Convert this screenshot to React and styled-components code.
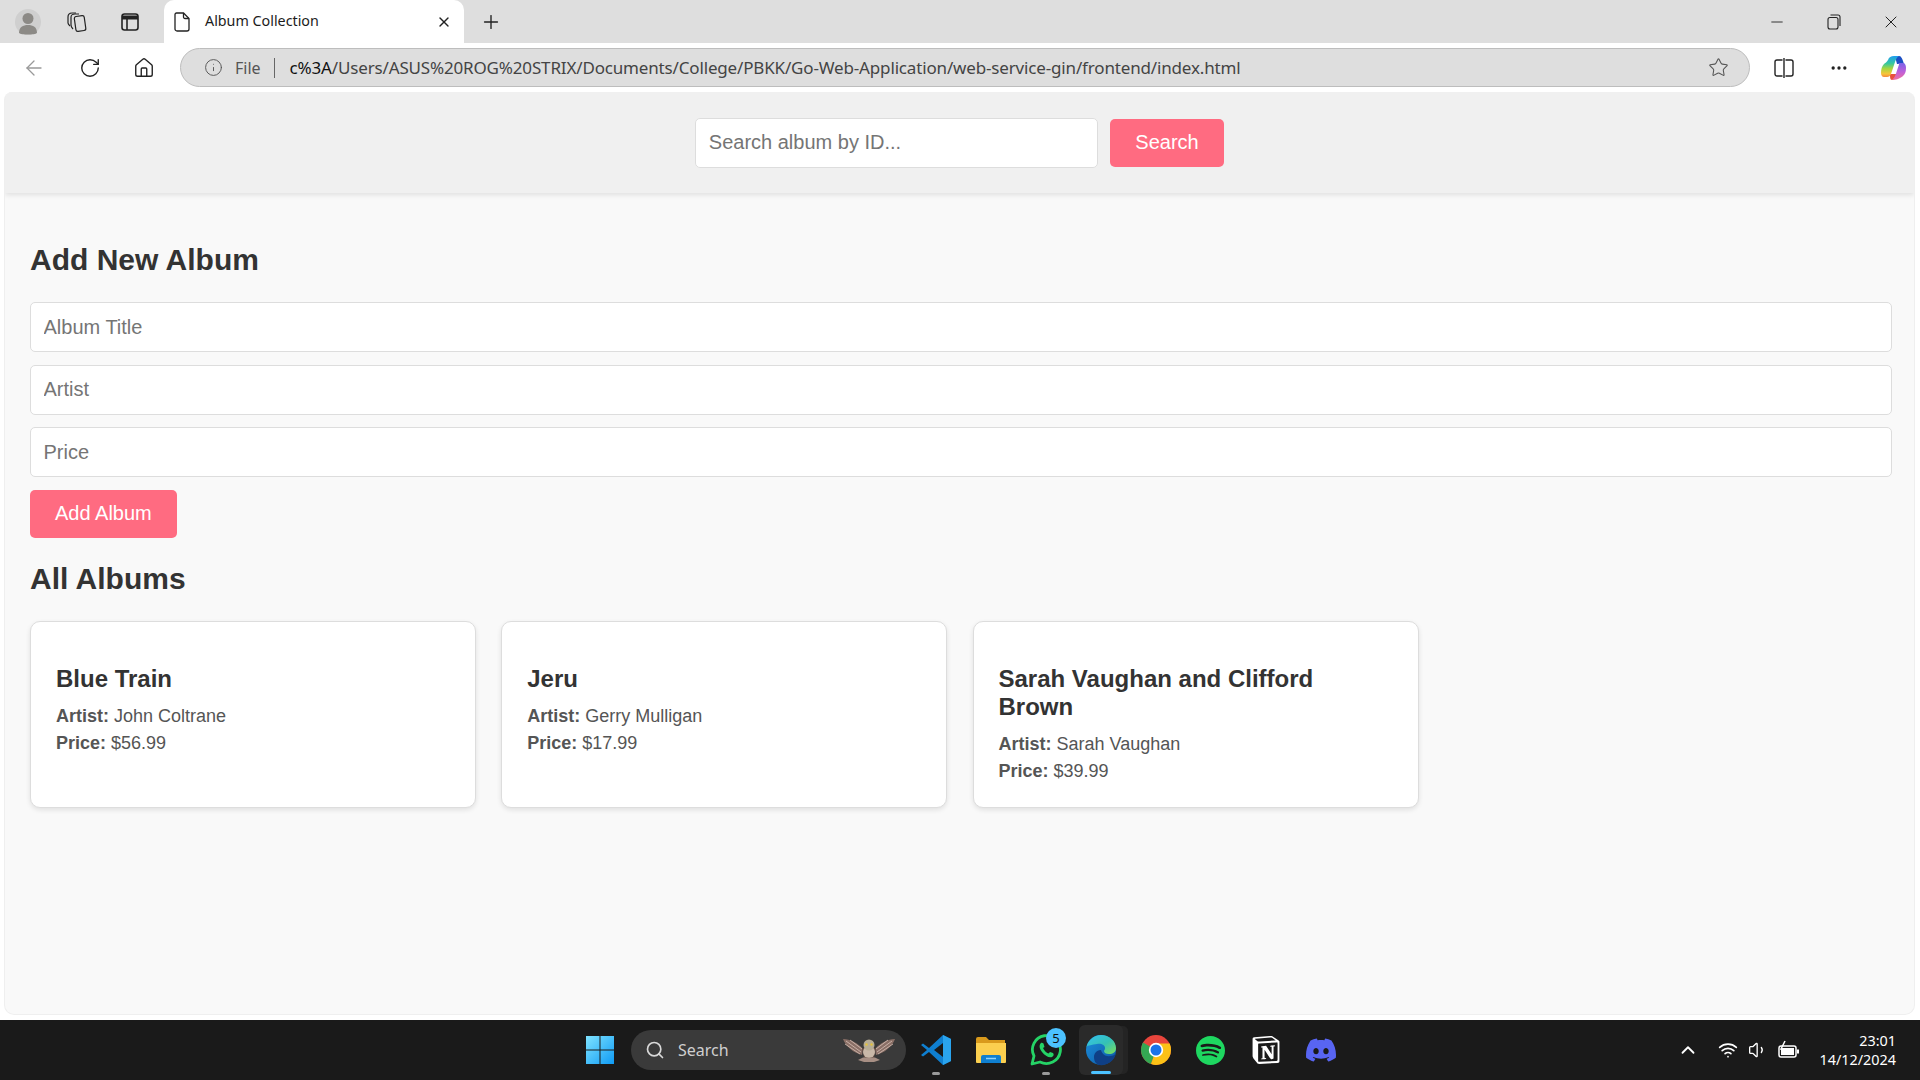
import React from 'react';
import styled, { createGlobalStyle } from 'styled-components';
import { Search as SearchGlyph, ChevronUp, Wifi, Volume1, X, Plus, ArrowLeft, RotateCw, Home, Info, Star, Minus, Ellipsis } from 'lucide-react';
import { SiDiscord, SiSpotify, SiNotion } from 'react-icons/si';

const GlobalStyle = createGlobalStyle`
    html, body {
        margin: 0;
        height: 100%;
        overflow: hidden;
        background: #ffffff;
    }
    * {
        box-sizing: border-box;
    }
`;

const Screen = styled.div`
    display: flex;
    flex-direction: column;
    width: 1920px;
    height: 1080px;
    overflow: hidden;
    background: #ffffff;
`;

/* browser chrome */
const TabStrip = styled.div`
    display: flex;
    align-items: flex-end;
    height: 43px;
    flex: none;
    background: #dedede;
    padding-left: 6px;
`;

const StripButton = styled.div`
    display: flex;
    align-items: center;
    justify-content: center;
    width: ${(p) => p.$w || 52}px;
    height: 43px;
    flex: none;
    color: #222222;
`;

const Tab = styled.div`
    display: flex;
    align-items: center;
    width: 300px;
    height: 43px;
    flex: none;
    margin-left: 8px;
    padding: 0 12px 0 10px;
    background: #ffffff;
    border-radius: 10px 10px 0 0;
`;

const TabTitle = styled.span`
    flex: 1;
    margin-left: 15px;
    padding-bottom: 2px;
    font: 14.3px 'Noto Sans', 'Open Sans', sans-serif;
    color: #1c1c1c;
`;

const WindowControls = styled.div`
    display: flex;
    margin-left: auto;
    padding-right: 1px;
`;

const AddressRow = styled.div`
    display: flex;
    align-items: center;
    height: 49px;
    flex: none;
    padding-left: 7px;
    background: #ffffff;
`;

const NavButton = styled.div`
    display: flex;
    align-items: center;
    justify-content: center;
    width: ${(p) => p.$w || 55}px;
    height: 40px;
    flex: none;
    color: ${(p) => p.$color || '#222222'};
`;

const AddressBar = styled.div`
    display: flex;
    align-items: center;
    width: 1570px;
    height: 39px;
    flex: none;
    margin-left: 10px;
    padding: 0 20px 0 23px;
    background: #dedede;
    border: 1px solid #bdbdbd;
    border-radius: 20px;
    font: 17px 'Noto Sans', 'Open Sans', sans-serif;
`;

const FileLabel = styled.span`
    margin-left: 12px;
    color: #555555;
    font-size: 16px;
`;

const Divider = styled.span`
    width: 1px;
    height: 20px;
    margin: 0 15px 0 13px;
    background: #666666;
`;

const Url = styled.span`
    flex: 1;
    color: #444444;
    white-space: nowrap;
    letter-spacing: -0.16px;
`;

const UrlHost = styled.span`
    color: #111111;
`;

/* page */
const Viewport = styled.main`
    flex: 1;
    min-height: 0;
    margin: 0 5px 5px 4px;
    background: #f9f9f9;
    border-radius: 8px 8px 10px 10px;
    border: 1px solid #efefef;
    border-top: none;
    overflow: hidden;
    font-family: 'Liberation Sans', Arial, sans-serif;
    color: #333333;
`;

const SearchBar = styled.header`
    display: flex;
    justify-content: center;
    align-items: center;
    gap: 12px;
    height: 101px;
    background: #f0f0f0;
    box-shadow: 0 2px 5px rgba(0, 0, 0, 0.1);
`;

const Field = styled.input`
    display: block;
    width: ${(p) => p.$w || '100%'};
    height: 50px;
    padding: 0 12.5px;
    background: #ffffff;
    border: 1px solid #dddddd;
    border-radius: 5px;
    font: 20px 'Liberation Sans', Arial, sans-serif;
    outline: none;
    &::placeholder {
        color: #757575;
        opacity: 1;
    }
`;

const PinkButton = styled.button`
    height: 48px;
    padding: 0 25px;
    background: #ff6b81;
    border: none;
    border-radius: 5px;
    color: #ffffff;
    font: 20px 'Liberation Sans', Arial, sans-serif;
`;

const Content = styled.section`
    padding: 0 22px 0 25px;
`;

const Heading = styled.h2`
    margin: ${(p) => p.$margin};
    font-size: 30px;
    line-height: 37px;
    font-weight: 700;
    color: #333333;
`;

const AlbumForm = styled.form`
    display: flex;
    flex-direction: column;
    align-items: flex-start;
    gap: 12.5px;
`;

const CardGrid = styled.div`
    display: grid;
    grid-template-columns: repeat(auto-fill, 446px);
    gap: 25.25px;
`;

const Card = styled.article`
    padding: 20px 25px 18px;
    background: #ffffff;
    border: 1px solid #dddddd;
    border-radius: 10px;
    box-shadow: 0 2px 5px rgba(0, 0, 0, 0.1);
`;

const CardTitle = styled.h3`
    margin: 23px 0 14px;
    font-size: 24px;
    line-height: 28px;
    font-weight: 700;
    color: #333333;
`;

const CardLine = styled.p`
    margin: 8px 0;
    font-size: 18px;
    line-height: 19px;
    color: #555555;
`;

/* taskbar */
const Taskbar = styled.footer`
    display: grid;
    grid-template-columns: 1fr auto 1fr;
    align-items: center;
    height: 60px;
    flex: none;
    background: #1a1a1a;
`;

const TaskCenter = styled.div`
    display: flex;
    align-items: center;
    grid-column: 2;
`;

const TaskItem = styled.div`
    position: relative;
    display: flex;
    align-items: center;
    justify-content: center;
    width: ${(p) => (p.$active ? 44 : 55)}px;
    height: 50px;
    flex: none;
    margin: ${(p) => (p.$active ? '0 5.5px' : '0')};
    border-radius: 6px;
    background: ${(p) => (p.$active ? '#2a2a2a' : 'transparent')};
    box-shadow: ${(p) => (p.$active ? '6px 0 0 -1px #242424' : 'none')};
`;

const RunDot = styled.span`
    position: absolute;
    bottom: ${(p) => (p.$active ? 1 : 0)}px;
    left: 50%;
    width: ${(p) => (p.$active ? 20 : 8)}px;
    height: 3px;
    margin-left: ${(p) => (p.$active ? -10 : -4)}px;
    border-radius: 2px;
    background: ${(p) => (p.$active ? '#4cc2ff' : '#9a9a9a')};
`;

const Badge = styled.span`
    position: absolute;
    top: 3px;
    right: 7px;
    width: 20px;
    height: 20px;
    border-radius: 50%;
    background: #4cc2ff;
    color: #111111;
    font: 13px/20px 'Noto Sans', sans-serif;
    text-align: center;
`;

const TaskSearch = styled.div`
    display: flex;
    align-items: center;
    width: 275px;
    height: 40px;
    flex: none;
    margin: 0 2px 0 4px;
    padding: 0 10px 0 14px;
    background: #3a3a3a;
    border-radius: 20px;
    color: #d8d8d8;
`;

const TaskSearchLabel = styled.span`
    flex: 1;
    margin-left: 13px;
    font: 16px 'Noto Sans', 'Open Sans', sans-serif;
    color: #cfcfcf;
`;

const Tray = styled.div`
    display: flex;
    align-items: center;
    justify-self: end;
    padding-right: 24px;
    color: #ffffff;
`;

const TrayIcon = styled.div`
    display: flex;
    justify-content: center;
    width: ${(p) => p.$w || 30}px;
`;

const Clock = styled.div`
    margin-left: 10px;
    font: 14.4px/19px 'Noto Sans', 'Open Sans', sans-serif;
    color: #ffffff;
    text-align: right;
`;

const Avatar = () => (
    <svg width="26" height="26" viewBox="0 0 26 26">
        <circle cx="13" cy="13" r="13" fill="#cfcfcf" />
        <circle cx="13" cy="9.5" r="5.5" fill="#8c8a86" />
        <path d="M4 24c0-6 4-8 9-8s9 2 9 8c-2 2-16 2-18 0z" fill="#8c8a86" />
    </svg>
);

const CollectionsIcon = () => (
    <svg width="22" height="22" viewBox="0 0 22 22" fill="none" stroke="#222" strokeWidth="1.2">
        <rect x="9" y="5" width="10" height="15" rx="2" transform="rotate(-8 14 12)" />
        <path d="M7 18c-1-1-2-2-2-4V6c0-2 2-3 4-3h4" />
        <path d="M4 15c-1-1-2-2-2-3V6c0-3 2-4 4-4h4" />
    </svg>
);

const VerticalTabsIcon = () => (
    <svg width="20" height="20" viewBox="0 0 20 20" fill="none" stroke="#222" strokeWidth="1.6">
        <rect x="2" y="2" width="16" height="16" rx="2.5" />
        <path d="M2 5.5h16" strokeWidth="4" />
        <path d="M7 6v12" />
    </svg>
);

const PageIcon = () => (
    <svg width="16" height="20" viewBox="0 0 16 20" fill="none" stroke="#222" strokeWidth="1.3">
        <path d="M2.5 1h7L15 6.5V17a2 2 0 0 1-2 2H3a2 2 0 0 1-2-2V2.500A1.500 1.500 0 0 1 2.500 1z" />
        <path d="M9.500 1v4a1.500 1.500 0 0 0 1.500 1.500h4" />
    </svg>
);

const RestoreIcon = () => (
    <svg width="14" height="16" viewBox="0 0 14 16" fill="none" stroke="#222" strokeWidth="1.1">
        <rect x="1" y="3.500" width="10" height="11.500" rx="2" />
        <path d="M3.500 1h7.500a2 2 0 0 1 2 2v9" />
    </svg>
);

const SplitIcon = () => (
    <svg width="20" height="22" viewBox="0 0 20 22" fill="none" stroke="#222" strokeWidth="1.4">
        <rect x="1" y="3" width="18" height="16" rx="2" />
        <path d="M10 0v22" fill="none" stroke="#fff" strokeWidth="3" />
        <path d="M10 1v20" />
    </svg>
);

const CopilotIcon = () => (
    <svg width="27" height="26" viewBox="0 0 27 26">
        <defs>
            <linearGradient id="copLeft" x1="0" y1="0" x2="0" y2="1">
                <stop offset="0" stopColor="#1f9df0" />
                <stop offset="0.35" stopColor="#35c7a0" />
                <stop offset="0.6" stopColor="#a6d63f" />
                <stop offset="0.85" stopColor="#f7c53a" />
                <stop offset="1" stopColor="#f58a3c" />
            </linearGradient>
            <linearGradient id="copRight" x1="0" y1="0" x2="0" y2="1">
                <stop offset="0" stopColor="#7a63e8" />
                <stop offset="0.55" stopColor="#c060d8" />
                <stop offset="1" stopColor="#f06f9c" />
            </linearGradient>
        </defs>
        <path d="M19 1c2 0 3 2 4 5l1 3h-7c-1-3-1-6-3-8z" fill="#1c4fc4" />
        <path d="M10 19h7c-1 3-2 6-5 6-2 0-2-3-2-6z" fill="#e8503c" />
        <path d="M8 5C9 2 11 1 14 1h5c-2 1-3 3-4 6l-4 12c-.7 2-2 3-4 3H4c-2 0-3-2-3-4 0-4 1-7 3-9 1-1 3-2 4-4z" fill="url(#copLeft)" />
        <path d="M17 8h6c2 0 3 2 3 5 0 4-1 6-3 8-1 1-3 2-5 3-1 .5-5 1-6 .5 2-1 3-3 4-6l3-9c0-1 -.5-1.500-2-1.500z" fill="url(#copRight)" />
    </svg>
);

const WindowsLogo = () => (
    <svg width="30" height="30" viewBox="0 0 30 30">
        <defs>
            <linearGradient id="winG" x1="0" y1="0" x2="1" y2="1">
                <stop offset="0" stopColor="#7fe3ff" />
                <stop offset="1" stopColor="#0f9bf5" />
            </linearGradient>
        </defs>
        <path d="M1 1h13.500v13.500H1zM15.500 1H29v13.500H15.500zM1 15.500h13.500V29H1zM15.500 15.500H29V29H15.500z" fill="url(#winG)" />
    </svg>
);

const Owl = () => (
    <svg width="54" height="26" viewBox="0 0 54 26">
        <path d="M1 2c7 0 15 4 20 10l-1 6C12 16 4 10 1 2z" fill="#8a6f66" />
        <path d="M53 2c-7 0-15 4-20 10l1 6c8-2 16-8 19-16z" fill="#8a6f66" />
        <path d="M4 4l15 11M8 3l12 9M3 7l15 10M50 4L35 15M46 3L34 12M51 7L36 17" stroke="#d8c2b8" strokeWidth="0.8" />
        <path d="M20 11h14l-2 10h-10z" fill="#5f4a42" />
        <ellipse cx="27" cy="15" rx="6" ry="6" fill="#c9b8a8" />
        <circle cx="27" cy="8" r="5.500" fill="#b7ad95" />
        <circle cx="24.500" cy="7.500" r="1.200" fill="#e2c23c" />
        <circle cx="29.500" cy="7.500" r="1.200" fill="#e2c23c" />
        <path d="M16 23l5-2.500h12l5 2.500-6 2h-10z" fill="#a78f84" />
    </svg>
);

const VsCodeIcon = () => (
    <svg width="32" height="32" viewBox="0 0 32 32">
        <path d="M23 1l8 4v22l-8 4-14-13-6 4.500L1 21l6-5-6-5 2-1.500L9 14z" fill="#0f7fd0" />
        <path d="M23 1l8 4v22l-8 4z" fill="#2aa4ee" />
        <path d="M23 9l-9 7 9 7z" fill="#1a1a1a" />
    </svg>
);

const FolderIcon = () => (
    <svg width="32" height="28" viewBox="0 0 32 28">
        <path d="M1 3a2 2 0 0 1 2-2h8l3 3h16v6H1z" fill="#d99a1c" />
        <path d="M1 7h30v19a1 1 0 0 1-1 1H2a1 1 0 0 1-1-1z" fill="#fbcf4f" />
        <path d="M6 27v-6a2 2 0 0 1 2-2h16a2 2 0 0 1 2 2v6z" fill="#0f7fd0" />
        <path d="M11 22.500h10" stroke="#8fd4ff" strokeWidth="1.500" />
    </svg>
);

const WhatsappIcon = () => (
    <svg width="32" height="32" viewBox="0 0 32 32">
        <path d="M2 30l2-8A14 14 0 1 1 10 28z" fill="none" stroke="#25d366" strokeWidth="2.800" strokeLinejoin="round" />
        <path d="M11 9c-2 2-2 5 1 9s7 6 10 5c2-1 2-3 1-4l-3-1-1.500 1.500c-2-.5-4.500-3-5.500-5.500L14.500 13l-1-3.500c-1-1-2-1-2.500-.5z" fill="#25d366" />
    </svg>
);

const EdgeIcon = () => (
    <svg width="32" height="32" viewBox="0 0 32 32">
        <defs>
            <linearGradient id="edgeA" x1="0" y1="0" x2="1" y2="1">
                <stop offset="0" stopColor="#35c1f1" />
                <stop offset="0.55" stopColor="#35c1b4" />
                <stop offset="1" stopColor="#7ee05a" />
            </linearGradient>
            <linearGradient id="edgeB" x1="0" y1="0" x2="1" y2="1">
                <stop offset="0" stopColor="#1d8fdc" />
                <stop offset="1" stopColor="#0c59a4" />
            </linearGradient>
        </defs>
        <circle cx="16" cy="16" r="15" fill="url(#edgeB)" />
        <path d="M1.500 13C3 6 9 1 16 1c8 0 15 6 15 13 0 4-3 6-7 6-3 0-5-1-5-3 0-1 1-1 1-3 0-3-4-5-8-4-5 1-9 1-11 3z" fill="url(#edgeA)" />
        <path d="M18 31c-5 1-9-2-9-8 0-3 2-7 7-7 1 4 5 7 9 6 3 0 5-1 6-3-1 6-6 11-13 12z" fill="#0f3f86" />
    </svg>
);

const ChromeIcon = () => (
    <svg width="32" height="32" viewBox="0 0 32 32">
        <circle cx="16" cy="16" r="15" fill="#e8453c" />
        <path d="M16 16L3 8.500A15 15 0 0 0 11 30.100z" fill="#34a853" />
        <path d="M16 16l-5 14.100A15 15 0 0 0 31 16z" fill="#fbc116" />
        <path d="M16 9.500h13.700A15 15 0 0 1 31 16H22z" fill="#fbc116" />
        <circle cx="16" cy="16" r="7.200" fill="#ffffff" />
        <circle cx="16" cy="16" r="5.500" fill="#1a73e8" />
    </svg>
);

const BatteryIcon = () => (
    <svg width="22" height="20" viewBox="0 0 22 20" fill="none">
        <rect x="1" y="6" width="17" height="11" rx="2" stroke="#fff" strokeWidth="1.500" />
        <rect x="3" y="8" width="13" height="7" fill="#fff" />
        <rect x="19" y="9.500" width="2" height="4" fill="#fff" />
        <path d="M7 1L3 9h4l-2 5" stroke="#fff" strokeWidth="1.500" />
    </svg>
);

const albums = [
    { id: 1, title: 'Blue Train', artist: 'John Coltrane', price: '56.99' },
    { id: 2, title: 'Jeru', artist: 'Gerry Mulligan', price: '17.99' },
    { id: 3, title: 'Sarah Vaughan and Clifford Brown', artist: 'Sarah Vaughan', price: '39.99' },
];

export default function App() {
    return (
        <Screen>
            <GlobalStyle />
            <TabStrip>
                <StripButton $w={44}><Avatar /></StripButton>
                <StripButton $w={54}><CollectionsIcon /></StripButton>
                <StripButton $w={52}><VerticalTabsIcon /></StripButton>
                <Tab>
                    <PageIcon />
                    <TabTitle>Album Collection</TabTitle>
                    <X size={16} strokeWidth={2} color="#222" />
                </Tab>
                <StripButton $w={54}><Plus size={22} strokeWidth={1.5} /></StripButton>
                <WindowControls>
                    <StripButton $w={57}><Minus size={18} strokeWidth={1.2} /></StripButton>
                    <StripButton $w={57}><RestoreIcon /></StripButton>
                    <StripButton $w={57}><X size={20} strokeWidth={1.2} /></StripButton>
                </WindowControls>
            </TabStrip>
            <AddressRow>
                <NavButton $w={54} $color="#999999"><ArrowLeft size={24} strokeWidth={1.3} /></NavButton>
                <NavButton $w={57}><RotateCw size={22} strokeWidth={1.5} /></NavButton>
                <NavButton $w={52}><Home size={22} strokeWidth={1.5} /></NavButton>
                <AddressBar>
                    <Info size={19} strokeWidth={1.2} color="#555" />
                    <FileLabel>File</FileLabel>
                    <Divider />
                    <Url><UrlHost>c%3A</UrlHost>/Users/ASUS%20ROG%20STRIX/Documents/College/PBKK/Go-Web-Application/web-service-gin/frontend/index.html</Url>
                    <Star size={21} strokeWidth={1.2} color="#555" />
                </AddressBar>
                <NavButton $w={68}><SplitIcon /></NavButton>
                <NavButton $w={42}><Ellipsis size={20} strokeWidth={2} /></NavButton>
                <NavButton $w={66}><CopilotIcon /></NavButton>
            </AddressRow>
            <Viewport>
                <SearchBar>
                    <Field $w="403px" placeholder="Search album by ID..." />
                    <PinkButton>Search</PinkButton>
                </SearchBar>
                <Content>
                    <Heading $margin="48px 0 24px">Add New Album</Heading>
                    <AlbumForm>
                        <Field placeholder="Album Title" />
                        <Field placeholder="Artist" />
                        <Field placeholder="Price" />
                        <PinkButton type="button">Add Album</PinkButton>
                    </AlbumForm>
                    <Heading $margin="22px 0 24px">All Albums</Heading>
                    <CardGrid>
                        {albums.map((album) => (
                            <Card key={album.id}>
                                <CardTitle>{album.title}</CardTitle>
                                <CardLine><strong>Artist:</strong> {album.artist}</CardLine>
                                <CardLine><strong>Price:</strong> ${album.price}</CardLine>
                            </Card>
                        ))}
                    </CardGrid>
                </Content>
            </Viewport>
            <Taskbar>
                <TaskCenter>
                    <TaskItem><WindowsLogo /></TaskItem>
                    <TaskSearch>
                        <SearchGlyph size={20} strokeWidth={2} />
                        <TaskSearchLabel>Search</TaskSearchLabel>
                        <Owl />
                    </TaskSearch>
                    <TaskItem><VsCodeIcon /><RunDot /></TaskItem>
                    <TaskItem><FolderIcon /></TaskItem>
                    <TaskItem><WhatsappIcon /><Badge>5</Badge><RunDot /></TaskItem>
                    <TaskItem $active><EdgeIcon /><RunDot $active /></TaskItem>
                    <TaskItem><ChromeIcon /></TaskItem>
                    <TaskItem><SiSpotify size={29} color="#1ed760" /></TaskItem>
                    <TaskItem><SiNotion size={28} color="#ffffff" /></TaskItem>
                    <TaskItem><SiDiscord size={30} color="#5865f2" /></TaskItem>
                </TaskCenter>
                <Tray>
                    <TrayIcon $w={40}><ChevronUp size={22} strokeWidth={2} /></TrayIcon>
                    <TrayIcon $w={40}><Wifi size={20} strokeWidth={2} /></TrayIcon>
                    <TrayIcon $w={20}><Volume1 size={20} strokeWidth={1.6} /></TrayIcon>
                    <TrayIcon $w={41}><BatteryIcon /></TrayIcon>
                    <Clock>23:01<br />14/12/2024</Clock>
                </Tray>
            </Taskbar>
        </Screen>
    );
}
